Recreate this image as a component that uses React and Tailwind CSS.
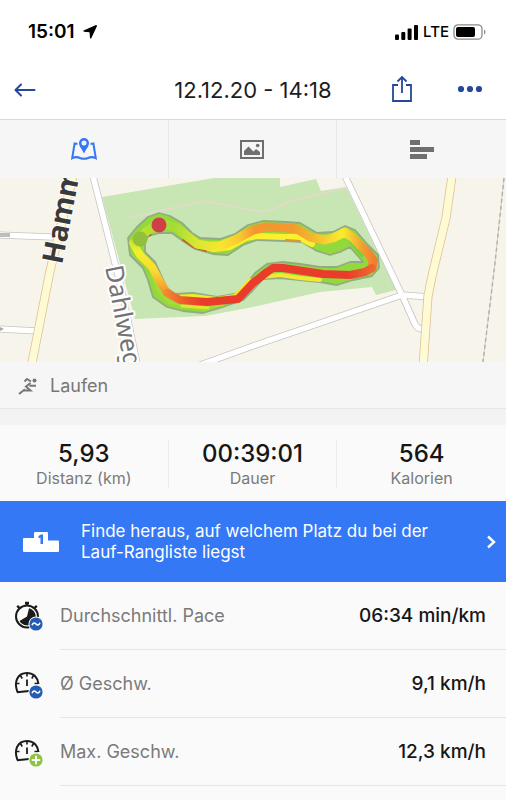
import { useState } from "react";

const LOOP_TOP =
  "M140 60 L147 53 L157 47 L168 47 L177 50 L186 57 L197 66 L208 68 L220 68 L235 62 L253 52 L267 49 L287 50 L297 51 L310 59 L325 62 L333 60 L345 54 L353 60 L367 74 L373 82 L372 90";
const LOOP_BOTTOM =
  "M372 90 L365 94 L350 97 L323 96 L303 93 L283 90 L273 90 L267 94 L253 105 L238 121 L207 124 L180 122 L167 115";
const LOOP_LEFT = "M167 115 L158 100 L152 89 L140 77 L133 65 L140 60";
const LOOP_BAND =
  "M128 60 L137 49 L148 39 L159 35 L170 38 L182 45 L192 55 L200 60 L220 61 L235 56 L248 47 L263 43 L287 44 L300 45 L317 55 L333 54 L345 48 L355 52 L368 67 L378 77 L379 90 L372 98 L353 102 L337 107 L320 104 L300 102 L280 100 L263 101 L253 112 L243 122 L223 129 L203 135 L183 133 L167 129 L153 119 L148 102 L143 90 L130 77 Z " +
  "M148 58 L160 55 L172 55 L183 63 L195 71 L213 76 L228 77 L243 67 L257 62 L287 63 L302 64 L317 73 L330 77 L340 74 L350 69 L358 78 L363 84 L350 84 L337 89 L320 89 L300 86 L283 84 L267 86 L255 95 L243 110 L235 116 L217 119 L193 115 L175 116 L167 110 L162 99 L155 84 L145 74 L145 64 Z";

const METRICS = [
  { label: "Durchschnittl. Pace", value: "06:34 min/km", icon: "pace", badge: "avg" },
  { label: "Ø Geschw.", value: "9,1 km/h", icon: "speed", badge: "avg" },
  { label: "Max. Geschw.", value: "12,3 km/h", icon: "speed", badge: "max" },
];

const STATS = [
  { value: "5,93", label: "Distanz (km)" },
  { value: "00:39:01", label: "Dauer" },
  { value: "564", label: "Kalorien" },
];

const StatusBar = () => (
  <div className="flex items-center justify-between pt-4 pr-5 pl-7 h-[60px] pb-3 text-black">
    <div className="flex items-center gap-2">
      <span className="text-[19px] leading-6 font-semibold">15:01</span>
      <svg width="14" height="14" viewBox="0 0 14 14" aria-hidden="true">
        <path d="M13 0 L0.5 5.5 Q0 6.5 1 6.8 L6.5 7.2 L7 13 Q7.5 14 8.4 13 L14 1 Q14 0 13 0 Z" fill="currentColor" />
      </svg>
    </div>
    <div className="flex items-center gap-1">
      <svg width="24" height="15" viewBox="0 0 24 15" aria-hidden="true">
        <rect x="0" y="9.5" width="4" height="5.5" rx="1" />
        <rect x="6.3" y="7" width="4" height="8" rx="1" />
        <rect x="12.6" y="3.5" width="4" height="11.5" rx="1" />
        <rect x="19" y="0" width="4" height="15" rx="1" />
      </svg>
      <span className="text-[15px] leading-6 font-medium">LTE</span>
      <svg width="33" height="16" viewBox="0 0 33 16" aria-hidden="true">
        <rect x="1" y="0.8" width="28" height="14.4" rx="4" fill="none" stroke="#8a8a8a" strokeWidth="1.3" />
        <rect x="3" y="3" width="19" height="10" rx="2" />
        <path d="M31 5.5 C33 6.5 33 9.5 31 10.5 Z" fill="#8a8a8a" />
      </svg>
    </div>
  </div>
);

const NavBar = () => (
  <header className="grid grid-cols-[1fr_auto_1fr] items-center h-[60px] px-3 border-b border-[#d9d9d9]">
    <button aria-label="Zurück" className="justify-self-start p-0.5 text-[#24489b]">
      <svg width="22" height="16" viewBox="0 0 22 16" fill="none" stroke="currentColor" strokeWidth="2" aria-hidden="true">
        <path d="M20.5 8 H2 M7 2.5 L1.5 8 L7 13.5" strokeLinecap="round" strokeLinejoin="round" />
      </svg>
    </button>
    <h1 className="text-[22px] leading-7 text-[#1d1d1f]">12.12.20 - 14:18</h1>
    <div className="flex items-center justify-self-end gap-11 pr-[11px] pb-0.5 text-[#24489b]">
      <button aria-label="Teilen">
        <svg width="22" height="28" viewBox="0 0 22 28" fill="none" stroke="currentColor" strokeWidth="1.8" aria-hidden="true">
          <path d="M7 10 H2 V26 H20 V10 H15 M11 18 V2 M6.5 6.5 L11 2 L15.5 6.5" />
        </svg>
      </button>
      <button aria-label="Mehr">
        <svg width="26" height="8" viewBox="0 0 26 8" fill="currentColor" aria-hidden="true">
          <circle cx="4" cy="4" r="3.1" />
          <circle cx="13" cy="4" r="3.1" />
          <circle cx="22" cy="4" r="3.1" />
        </svg>
      </button>
    </div>
  </header>
);

const TABS = [
  {
    id: "map",
    label: "Karte",
    icon: (
      <svg width="26" height="22" viewBox="0 0 26 22" aria-hidden="true">
        <path
          d="M6.5 6 L3.6 5.5 L1.2 20.2 C3.5 19 6.5 18.8 9 20 C11.5 21 14.5 21 17 20 C19.5 18.8 22.5 19 24.8 20.2 L22.4 5.5 L19.5 6"
          fill="none"
          stroke="currentColor"
          strokeWidth="2"
        />
        <path
          fillRule="evenodd"
          fill="currentColor"
          d="M13 0 A5 5 0 0 0 8 5 C8 8.5 11 11 13 15.5 C15 11 18 8.5 18 5 A5 5 0 0 0 13 0 Z M13 2.4 A2.5 2.5 0 1 1 13 7.4 A2.5 2.5 0 1 1 13 2.4 Z"
        />
      </svg>
    ),
  },
  {
    id: "photos",
    label: "Fotos",
    icon: (
      <svg width="24" height="19" viewBox="0 0 24 19" aria-hidden="true">
        <rect x="1" y="1" width="22" height="17" fill="none" stroke="currentColor" strokeWidth="2" />
        <path d="M4 15 V11 L8.5 6.5 L13.5 11.5 L16 9 L20 12 V15 Z" fill="currentColor" />
        <circle cx="17.7" cy="5.5" r="1.8" fill="currentColor" />
      </svg>
    ),
  },
  {
    id: "laps",
    label: "Runden",
    icon: (
      <svg width="24" height="19" viewBox="0 0 24 19" fill="currentColor" aria-hidden="true">
        <rect width="10" height="5" />
        <rect y="7" width="24" height="5" />
        <rect y="14" width="17" height="5" />
      </svg>
    ),
  },
];

const Tabs = ({ active, onChange }) => (
  <nav className="grid grid-cols-3 h-[58px] bg-[#f6f6f6] divide-x divide-[#e8e8e8]">
    {TABS.map((tab) => (
      <button
        key={tab.id}
        aria-label={tab.label}
        aria-pressed={active === tab.id}
        onClick={() => onChange(tab.id)}
        className={`flex items-center justify-center ${active === tab.id ? "text-[#3478f6]" : "text-[#6f6f6f]"}`}
      >
        {tab.icon}
      </button>
    ))}
  </nav>
);

const RouteMap = () => (
  <svg
    viewBox="0 0 506 184"
    preserveAspectRatio="xMidYMid slice"
    className="block w-full bg-[#f7f4ec]"
    role="img"
    aria-label="Strecke"
  >
    <defs>
      <linearGradient id="pace-top" gradientUnits="userSpaceOnUse" x1="140" y1="0" x2="378" y2="0">
        <stop offset="0" stopColor="#b9e02f" />
        <stop offset="0.14" stopColor="#a3dc36" />
        <stop offset="0.24" stopColor="#d9e82f" />
        <stop offset="0.34" stopColor="#f9e431" />
        <stop offset="0.42" stopColor="#f8c930" />
        <stop offset="0.48" stopColor="#f3962f" />
        <stop offset="0.64" stopColor="#f29a30" />
        <stop offset="0.72" stopColor="#f3b52f" />
        <stop offset="0.85" stopColor="#faec2f" />
        <stop offset="0.93" stopColor="#f3a132" />
        <stop offset="1" stopColor="#ef7630" />
      </linearGradient>
      <linearGradient id="pace-bottom" gradientUnits="userSpaceOnUse" x1="163" y1="0" x2="378" y2="0">
        <stop offset="0" stopColor="#f29131" />
        <stop offset="0.1" stopColor="#ee5a2b" />
        <stop offset="0.18" stopColor="#e93c2b" />
        <stop offset="0.85" stopColor="#e93c2b" />
        <stop offset="1" stopColor="#f0702f" />
      </linearGradient>
      <linearGradient id="pace-left" gradientUnits="userSpaceOnUse" x1="0" y1="60" x2="0" y2="115">
        <stop offset="0" stopColor="#b6e034" />
        <stop offset="0.25" stopColor="#f2f02e" />
        <stop offset="0.6" stopColor="#fbd932" />
        <stop offset="1" stopColor="#f29131" />
      </linearGradient>
    </defs>

    {/* park */}
    <path
      d="M102 19 L214 0 H280 V9 L316 1 L321 13 L346 9 L396 112 L376 117 L372 109 L320 114 L253 129 L205 138 L135 141 Z"
      fill="#c7e6b3"
    />
    <path d="M128 40 L205 23 L262 34 L274 31 L290 23 L346 10" fill="none" stroke="#e8d8cc" strokeWidth="1.5" />

    {/* minor roads */}
    <g fill="none" strokeLinejoin="round">
      <g stroke="#c6c4c1" strokeWidth="7">
        <path d="M93 -2 L121 109 L138 190" />
        <path d="M345 -2 L402 117 L414 144 Q417 152 424 151" />
        <path d="M200 187 L253 168 L402 117 L430 119" />
        <path d="M-2 57 L52 59" />
        <path d="M-2 151 L37 153" />
      </g>
      <g stroke="#fff" strokeWidth="5.5">
        <path d="M93 -2 L121 109 L138 190" />
        <path d="M345 -2 L402 117 L414 144 Q417 152 424 151" />
        <path d="M200 187 L253 168 L402 117 L430 119" />
        <path d="M-2 57 L52 59" />
        <path d="M-2 151 L37 153" />
      </g>
      <path d="M0 57 L10 57" stroke="#bdbdbd" strokeWidth="4" />
      <path d="M0 149 L4 151 L0 153 Z" fill="#aaa" />
    </g>

    {/* main roads */}
    <g fill="none">
      <g stroke="#dfbe91" strokeWidth="9">
        <path d="M73 -2 L50 93 L31 190" />
        <path d="M452 -2 L446 40 L432 98 L428 118 L423 190" />
      </g>
      <g stroke="#fefad4" strokeWidth="7.5">
        <path d="M73 -2 L50 93 L31 190" />
        <path d="M452 -2 L446 40 L432 98 L428 118 L423 190" />
      </g>
      <path d="M504 0 L495 85 L483 184" stroke="#d3d1cd" strokeWidth="1" />
      <path d="M504 0 L495 85 L483 184" stroke="#b3b0ac" strokeWidth="1.4" strokeDasharray="4 3" />
    </g>

    <g fontFamily="'Noto Sans', 'Open Sans', sans-serif" paintOrder="stroke" strokeLinejoin="round" stroke="#fff">
      <text transform="translate(62 87) rotate(-79)" fontSize="29" fontWeight="700" fill="#3a3a3c" strokeWidth="2">
        Hamm
      </text>
      <text transform="translate(105 89) rotate(79)" fontSize="25" fill="#747476" strokeWidth="4">
        Dahlweg
      </text>
    </g>

    {/* recorded laps, coloured by speed */}
    <path d={LOOP_BAND} fill="#92d93c" fillRule="evenodd" stroke="#93aa84" strokeWidth="1.8" strokeLinejoin="round" />
    <g fill="none" strokeLinejoin="round" strokeLinecap="round">
      <path d="M186 58 L196 66 L214 71 L230 69 L246 60 L257 58 L285 59 L298 59 L312 66" stroke="#faf02f" strokeWidth="6" />
      <path d="M286 62 L300 63" stroke="#d79a35" strokeWidth="2" />
      <path d="M183 62 L193 69 L206 73" stroke="#c3662e" strokeWidth="2" />
      <path d="M146 59 L151 57" stroke="#a2622e" strokeWidth="1.5" />
      <path d="M174 119 L193 118 L217 121 L235 118 L250 102 M244 117 L262 99 L280 97 L300 100 L320 102" stroke="#f3ea2f" strokeWidth="4" />
      <path d="M153 96 L159 112 L170 124 L200 129 L222 126" stroke="#a2dc37" strokeWidth="5" />
      <path d="M182 128 L208 130" stroke="#e0e62f" strokeWidth="3" />
      <path d="M350 62 L362 77" stroke="#78cf36" strokeWidth="4" />
      <path d={LOOP_TOP} stroke="url(#pace-top)" strokeWidth="9" />
      <path d={LOOP_LEFT} stroke="url(#pace-left)" strokeWidth="8" />
      <path d={LOOP_BOTTOM} stroke="url(#pace-bottom)" strokeWidth="8" />
    </g>
    <circle cx="140" cy="61" r="7.5" fill="#94be3e" />
    <circle cx="159" cy="47" r="7.5" fill="#cf3f49" />
  </svg>
);

const RunnerIcon = () => (
  <svg width="20" height="18" viewBox="0 0 20 18" fill="none" stroke="currentColor" strokeWidth="2" aria-hidden="true">
    <circle cx="16.5" cy="3.5" r="2" fill="currentColor" stroke="none" />
    <path d="M6.5 4.5 L9 2 L13 4.5 M1 17 L7 12.2 M5.5 13.5 L12.5 13.5 L8 9.5 L12.5 6 M11.5 8.8 H18" />
  </svg>
);

const PodiumIcon = () => (
  <svg width="36" height="20" viewBox="0 0 36 20" aria-hidden="true" className="shrink-0">
    <path d="M1 6 H11 V1 Q11 0 12 0 H24 Q25 0 25 1 V8.5 H35 Q36 8.5 36 9.5 V19 Q36 20 35 20 H1 Q0 20 0 19 V7 Q0 6 1 6 Z" fill="#fff" />
    <path d="M15.5 4 L18 2.5 H20 V12 H17.5 V5.5 L15.5 6.5 Z" fill="#3478f6" />
  </svg>
);

const MetricIcon = ({ icon, badge }) => (
  <svg width="30" height="30" viewBox="0 0 30 30" className="shrink-0" aria-hidden="true">
    {icon === "pace" ? (
      <g>
        <circle cx="13" cy="15.5" r="11" fill="none" stroke="#1b1b1b" strokeWidth="2" />
        <path d="M13 1 V5 M11 2 H15 M3.2 4.8 L6 7.5 M22.8 4.8 L20.5 7" stroke="#1b1b1b" strokeWidth="2.4" />
        <path d="M13 15.5 L15 7.2 A8.7 8.7 0 1 1 5.5 20 Z" fill="#1b1b1b" />
      </g>
    ) : (
      <g fill="none" stroke="#1b1b1b" strokeWidth="2">
        <path d="M3.5 23.2 C-0.5 13 3.5 4 13 4 C20 4 24 9 24.5 15 M3 23.2 L15 22" />
        <path d="M13 4 V7.5 M6.5 6.5 L8.2 9.5 M2 14.5 H5.5 M19.5 6.5 L17.8 9.5 M24 14.5 H20.5" strokeWidth="1.6" />
        <path d="M13 10.5 V17" strokeWidth="1.8" />
      </g>
    )}
    <circle cx="22" cy="23" r="7.6" fill="#fafafa" />
    <circle cx="22" cy="23" r="6.6" fill={badge === "avg" ? "#245cb2" : "#8cc63f"} />
    {badge === "avg" ? (
      <path d="M18 24.2 C19.3 21.2 20.8 21.6 22 23 C23.2 24.4 24.7 24.8 26 21.8" fill="none" stroke="#fff" strokeWidth="1.6" />
    ) : (
      <path d="M22 18.8 V27.2 M17.8 23 H26.2" stroke="#fff" strokeWidth="2" />
    )}
  </svg>
);

const StatsRow = () => (
  <dl className="grid grid-cols-3 pt-[15px] pb-[13px] divide-x divide-[#ececec] bg-[#fafafa]">
    {STATS.map((stat) => (
      <div key={stat.label} className="flex flex-col-reverse items-center">
        <dt className="text-base leading-5 text-[#7a7a7a]">{stat.label}</dt>
        <dd className="text-2xl leading-7 font-medium text-[#161616]">{stat.value}</dd>
      </div>
    ))}
  </dl>
);

const RankingBanner = () => (
  <a href="#rangliste" className="flex items-center h-[81px] pl-[23px] pr-2.5 bg-[#3478f6] text-white">
    <PodiumIcon />
    <span className="flex-1 pl-[22px] pr-12 text-[17px] leading-[21px]">
      Finde heraus, auf welchem Platz du bei der Lauf-Rangliste liegst
    </span>
    <svg width="10" height="14" viewBox="0 0 10 14" fill="none" stroke="#fff" strokeWidth="2.4" aria-hidden="true">
      <path d="M2 1.5 L8 7 L2 12.5" />
    </svg>
  </a>
);

const MetricList = () => (
  <ul className="bg-[#fafafa]">
    {METRICS.map((metric) => (
      <li key={metric.label} className="flex items-center pl-3.5">
        <MetricIcon icon={metric.icon} badge={metric.badge} />
        <div className="flex flex-1 items-center justify-between ml-4 pr-5 py-5 border-b border-[#e5e5e5]">
          <span className="text-lg leading-[27px] text-[#7a7a7a]">{metric.label}</span>
          <span className="text-[19px] leading-[27px] font-medium text-[#161616]">{metric.value}</span>
        </div>
      </li>
    ))}
  </ul>
);

const App = () => {
  const [tab, setTab] = useState("map");

  return (
    <div className="min-h-screen bg-[#fafafa] font-['Inter',sans-serif]">
      <div className="bg-white">
        <StatusBar />
        <NavBar />
      </div>
      <Tabs active={tab} onChange={setTab} />
      <RouteMap />
      <div className="flex items-center gap-3 h-[47px] pt-0.5 px-[18px] bg-[#f6f6f6] border-b border-[#e6e6e6] text-[#777]">
        <RunnerIcon />
        <span className="text-lg leading-6">Laufen</span>
      </div>
      <div className="h-4 bg-[#f3f3f3]" />
      <StatsRow />
      <RankingBanner />
      <MetricList />
    </div>
  );
};

export default App;
